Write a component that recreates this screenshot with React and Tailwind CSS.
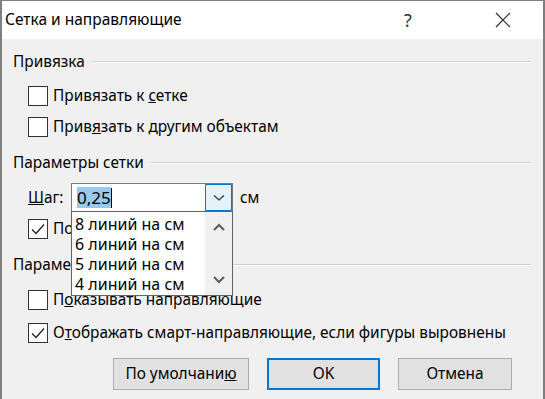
import React from "react";

const font = { fontFamily: '"Noto Sans", "Open Sans", sans-serif' };

const Check = ({ checked }) => (
  <div className="w-[20px] h-[20px] border border-[#333333] bg-white flex items-center justify-center shrink-0">
    {checked && (
      <svg width="16" height="16" viewBox="0 0 16 16">
        <path d="M2 8.5 L6 12.5 L14 3.5" fill="none" stroke="#222" strokeWidth="1.3" />
      </svg>
    )}
  </div>
);

const GroupLabel = ({ children, className }) => (
  <div className={"h-[22px] flex items-center pl-[11px] pr-[12px] " + className}>
    <span className="text-[15.4px] text-black">{children}</span>
    <div className="flex-1 ml-[7px] border-t border-[#d2d2d2] border-b-white border-b" />
  </div>
);

const CheckRow = ({ checked, children, className }) => (
  <div className={"h-[30px] flex items-center pl-[26px] gap-[5px] " + className}>
    <Check checked={checked} />
    <span className="text-[15.4px] text-black whitespace-nowrap">{children}</span>
  </div>
);

const Chevron = ({ up }) => (
  <svg width="14" height="10" viewBox="0 0 14 10">
    <path d={up ? "M2 8 L7 3 L12 8" : "M2 2 L7 7 L12 2"} fill="none" stroke="#606060" strokeWidth="2.2" />
  </svg>
);

export default function App() {
  const items = ["8 линий на см", "6 линий на см", "5 линий на см", "4 линий на см"];
  return (
    <div style={font} className="w-[545px] h-[399px] bg-[#f0f0f0] border-x-2 border-t border-[#7f7f7f] flex flex-col overflow-hidden relative">
      <div className="h-[38px] bg-white flex items-center pl-[3px] shrink-0">
        <span className="text-[15.5px] text-black flex-1">Сетка и направляющие</span>
        <span className="text-[18px] text-[#333] w-[30px] mr-[72px] text-center">?</span>
        <svg width="16" height="16" viewBox="0 0 16 16" className="mr-[32px]">
          <path d="M1 1 L15 15 M15 1 L1 15" stroke="#333" strokeWidth="1.2" />
        </svg>
      </div>

      <GroupLabel className="mt-[12px]">Привязка</GroupLabel>
      <CheckRow className="mt-[8px]">Привязать к <u>с</u>етке</CheckRow>
      <CheckRow className="mt-[1px]">Прив<u>я</u>зать к другим объектам</CheckRow>

      <GroupLabel className="mt-[10px]">Параметры сетки</GroupLabel>
      <div className="h-[29px] mt-[9px] flex items-center pl-[26px] relative">
        <span className="text-[15.4px] w-[43px]"><u>Ш</u>аг:</span>
        <div className="w-[162px] h-[29px] bg-white border border-[#7a7a7a] flex items-center">
          <div className="flex-1 pl-[5px] flex items-center">
            <span className="text-[17px] bg-[#99c9ef] text-black leading-[21px]">0,25</span>
            <span className="w-px h-[20px] bg-black" />
          </div>
          <div className="w-[27px] h-[27px] bg-[#e5f1fb] border border-[#0078d7] flex items-center justify-center">
            <svg width="12" height="8" viewBox="0 0 12 8">
              <path d="M1 1.5 L6 6 L11 1.5" fill="none" stroke="#333" strokeWidth="1.2" />
            </svg>
          </div>
        </div>
        <span className="text-[15.4px] ml-[7px]">см</span>

        <div className="absolute left-[69px] top-[28px] w-[162px] h-[85px] bg-white border border-[#646464] flex z-10">
          <div className="flex-1 flex flex-col pl-[3px] pt-[2px]">
            {items.map((t) => (
              <div key={t} className="h-[20px] flex items-center text-[16px] text-black whitespace-nowrap">
                {t}
              </div>
            ))}
          </div>
          <div className="w-[27px] bg-[#f0f0f0] flex flex-col items-center justify-between py-[10px]">
            <Chevron up />
            <Chevron />
          </div>
        </div>
      </div>
      <CheckRow checked className="mt-[2px] h-[28px]">По<u>к</u>азывать сетку</CheckRow>

      <GroupLabel className="mt-[10px]">Параметры направляющих</GroupLabel>
      <CheckRow className="mt-[9px]">П<u>о</u>казывать направляющие</CheckRow>
      <CheckRow checked className="mt-[3px]">О<u>т</u>ображать смарт-направляющие, если фигуры выровнены</CheckRow>

      <div className="mt-[10px] flex pl-[111px] gap-[18px]">
        <button className="w-[136px] h-[32px] bg-[#e1e1e1] border border-[#adadad] text-[15.4px] text-black">
          По умолчани<u>ю</u>
        </button>
        <button className="w-[113px] h-[32px] bg-[#e1e1e1] border-2 border-[#0078d7] text-[15.4px] text-black">
          OK
        </button>
        <button className="w-[114px] h-[32px] bg-[#e1e1e1] border border-[#adadad] text-[15.4px] text-black">
          Отмена
        </button>
      </div>
    </div>
  );
}
